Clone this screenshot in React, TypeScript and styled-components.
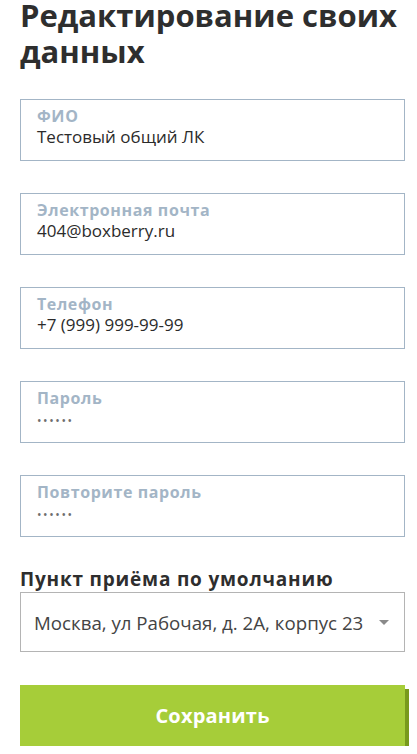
import * as React from 'react';
import styled, { createGlobalStyle } from 'styled-components';

const Global = createGlobalStyle`
  body {
    margin: 0;
    background: #fff;
    font-family: "Open Sans", "Noto Sans", sans-serif;
  }
`;

const Page = styled.div`
  width: 385px;
  padding: 0 12px 0 20px;
`;

const Title = styled.h1`
  margin: -3px 0 0;
  font-size: 31px;
  line-height: 36px;
  font-weight: 700;
  color: #2e2e2e;
`;

const Form = styled.div`
  display: flex;
  flex-direction: column;
  gap: 32px;
  margin-top: 30px;
`;

const Field = styled.div`
  box-sizing: border-box;
  height: 62px;
  border: 1px solid #a3b5c6;
  padding: 6px 16px 0;
  display: flex;
  flex-direction: column;
`;

const Label = styled.div`
  font-size: 16px;
  line-height: 20px;
  font-weight: 700;
  letter-spacing: 0.6px;
  color: #a3b5c6;
`;

const Value = styled.div<{ $secret?: boolean }>`
  font-size: 17px;
  line-height: 22px;
  color: #2b2b2b;
  ${(p) => p.$secret && 'font-size: 12px; letter-spacing: 1.6px; color: #6e6e6e; margin-top: 2px;'}
`;

const Section = styled.div`
  margin-top: 31px;
`;

const SectionTitle = styled.div`
  font-size: 19px;
  line-height: 22px;
  font-weight: 700;
  letter-spacing: 0.8px;
  color: #2e2e2e;
`;

const Select = styled.div`
  box-sizing: border-box;
  height: 60px;
  margin-top: 2px;
  border: 1px solid #b4b4b4;
  padding: 0 15px 0 13px;
  display: flex;
  align-items: center;
  justify-content: space-between;
  font-size: 18.7px;
  color: #444;
`;

const Arrow = styled.span`
  width: 0;
  height: 0;
  border-left: 5px solid transparent;
  border-right: 5px solid transparent;
  border-top: 5px solid #8a8a8a;
`;

const Button = styled.button`
  display: block;
  width: 385px;
  height: 61px;
  margin-top: 33px;
  border: 0;
  background: #a6cd39;
  box-shadow: 4px 4px 0 #789a1c;
  color: #fff;
  font-family: inherit;
  font-size: 20px;
  font-weight: 700;
  letter-spacing: 0.2px;
  cursor: pointer;
`;

const fields = [
  { label: 'ФИО', value: 'Тестовый общий ЛК' },
  { label: 'Электронная почта', value: '404@boxberry.ru' },
  { label: 'Телефон', value: '+7 (999) 999-99-99' },
  { label: 'Пароль', value: '••••••', secret: true },
  { label: 'Повторите пароль', value: '••••••', secret: true },
];

const App = () => (
  <Page>
    <Global />
    <Title>Редактирование своих данных</Title>
    <Form>
      {fields.map((f) => (
        <Field key={f.label}>
          <Label>{f.label}</Label>
          <Value $secret={f.secret}>{f.value}</Value>
        </Field>
      ))}
    </Form>
    <Section>
      <SectionTitle>Пункт приёма по умолчанию</SectionTitle>
      <Select>
        <span>Москва, ул Рабочая, д. 2А, корпус 23</span>
        <Arrow />
      </Select>
    </Section>
    <Button>Сохранить</Button>
  </Page>
);

export default App;
